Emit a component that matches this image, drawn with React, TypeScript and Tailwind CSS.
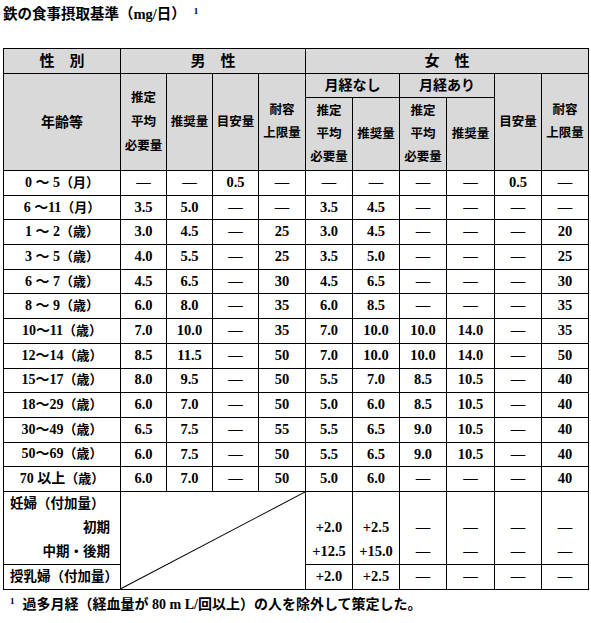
import React from 'react'

type Row = string[]

const ages: Row[] = [
  ['0 ～ 5（月）', '—', '—', '0.5', '—', '—', '—', '—', '—', '0.5', '—'],
  ['6 ～11（月）', '3.5', '5.0', '—', '—', '3.5', '4.5', '—', '—', '—', '—'],
  ['1 ～ 2（歳）', '3.0', '4.5', '—', '25', '3.0', '4.5', '—', '—', '—', '20'],
  ['3 ～ 5（歳）', '4.0', '5.5', '—', '25', '3.5', '5.0', '—', '—', '—', '25'],
  ['6 ～ 7（歳）', '4.5', '6.5', '—', '30', '4.5', '6.5', '—', '—', '—', '30'],
  ['8 ～ 9（歳）', '6.0', '8.0', '—', '35', '6.0', '8.5', '—', '—', '—', '35'],
  ['10～11（歳）', '7.0', '10.0', '—', '35', '7.0', '10.0', '10.0', '14.0', '—', '35'],
  ['12～14（歳）', '8.5', '11.5', '—', '50', '7.0', '10.0', '10.0', '14.0', '—', '50'],
  ['15～17（歳）', '8.0', '9.5', '—', '50', '5.5', '7.0', '8.5', '10.5', '—', '40'],
  ['18～29（歳）', '6.0', '7.0', '—', '50', '5.0', '6.0', '8.5', '10.5', '—', '40'],
  ['30～49（歳）', '6.5', '7.5', '—', '55', '5.5', '6.5', '9.0', '10.5', '—', '40'],
  ['50～69（歳）', '6.0', '7.5', '—', '50', '5.5', '6.5', '9.0', '10.5', '—', '40'],
  ['70 以上（歳）', '6.0', '7.0', '—', '50', '5.0', '6.0', '—', '—', '—', '40'],
]

const colWidths = ['w-[117px]', 'w-[46px]', 'w-[46px]', 'w-[46px]', 'w-[47px]', 'w-[47px]', 'w-[47px]', 'w-[47px]', 'w-[48px]', 'w-[47px]', 'w-[47px]']

const th = 'border border-black bg-[#d9d9d9] text-center align-middle font-bold p-0'
const td = 'border border-black text-center align-middle p-0 text-[14.5px] font-bold'

function Stack({ lines, lh = 'leading-[24px]' }: { lines: string[]; lh?: string }) {
  return (
    <div className={`text-[12.5px] ${lh}`}>
      {lines.map((l) => (
        <div key={l}>{l}</div>
      ))}
    </div>
  )
}

// age label: digits a bit larger than the bracketed unit
function AgeLabel({ text }: { text: string }) {
  const i = text.indexOf('（')
  return (
    <>
      <span className="text-[14px]">{text.slice(0, i)}</span>
      <span className="text-[13px]">{text.slice(i)}</span>
    </>
  )
}

export default function App() {
  return (
    <div className="w-[591px] h-[623px] bg-white text-black font-['Liberation_Serif','Noto_Sans_CJK_JP',serif]">
      <div className="h-[48px] pl-[3px] pt-[4px] flex items-start">
        <span className="text-[14.5px] leading-[20px] font-bold">鉄の食事摂取基準（mg/日）</span>
        <span className="ml-[8px] text-[9px] leading-[14px] font-bold">1</span>
      </div>

      <div className="pl-[3px]">
        <table className="border-collapse table-fixed w-[585px]">
          <colgroup>
            {colWidths.map((w, i) => (
              <col key={i} className={w} />
            ))}
          </colgroup>
          <thead>
            <tr className="h-[25px]">
              <th className={`${th} text-[15px]`}>性　別</th>
              <th colSpan={4} className={`${th} text-[15px]`}>男　性</th>
              <th colSpan={6} className={`${th} text-[15px]`}>女　性</th>
            </tr>
            <tr className="h-[24px]">
              <th rowSpan={2} className={`${th} text-[14px]`}>年齢等</th>
              <th rowSpan={2} className={th}><Stack lines={['推定', '平均', '必要量']} /></th>
              <th rowSpan={2} className={`${th} text-[12.5px]`}>推奨量</th>
              <th rowSpan={2} className={`${th} text-[12.5px]`}>目安量</th>
              <th rowSpan={2} className={th}><Stack lines={['耐容', '上限量']} lh="leading-[23px]" /></th>
              <th colSpan={2} className={`${th} text-[14px]`}>月経なし</th>
              <th colSpan={2} className={`${th} text-[14px]`}>月経あり</th>
              <th rowSpan={2} className={`${th} text-[12.5px]`}>目安量</th>
              <th rowSpan={2} className={th}><Stack lines={['耐容', '上限量']} lh="leading-[23px]" /></th>
            </tr>
            <tr className="h-[73px]">
              <th className={th}><Stack lines={['推定', '平均', '必要量']} lh="leading-[23px]" /></th>
              <th className={`${th} text-[12.5px]`}>推奨量</th>
              <th className={th}><Stack lines={['推定', '平均', '必要量']} lh="leading-[23px]" /></th>
              <th className={`${th} text-[12.5px]`}>推奨量</th>
            </tr>
          </thead>
          <tbody>
            {ages.map((r) => (
              <tr key={r[0]} className="h-[24.7px]">
                <td className="border border-black text-center align-middle p-0 text-[13px] leading-[16px] font-bold whitespace-nowrap">
                  <AgeLabel text={r[0]} />
                </td>
                {r.slice(1).map((v, i) => (
                  <td key={i} className={td}>{v}</td>
                ))}
              </tr>
            ))}

            {/* 妊婦 block */}
            <tr className="h-[24.3px]">
              <td className="border-x border-t border-black text-left align-middle pl-[6px] text-[13.5px] font-bold whitespace-nowrap">妊婦（付加量）</td>
              <td rowSpan={4} colSpan={4} className="relative border border-black p-0">
                <svg className="absolute inset-0 w-full h-full" viewBox="0 0 100 100" preserveAspectRatio="none">
                  <line x1="0" y1="100" x2="100" y2="0" stroke="#000" strokeWidth="1" vectorEffect="non-scaling-stroke" />
                </svg>
              </td>
              {Array.from({ length: 6 }).map((_, i) => (
                <td key={i} className="border-x border-t border-black p-0" />
              ))}
            </tr>
            <tr className="h-[24.3px]">
              <td className="border-x border-black text-right align-middle pr-[10px] text-[13.5px] font-bold">初期</td>
              {['+2.0', '+2.5', '—', '—', '—', '—'].map((v, i) => (
                <td key={i} className="border-x border-black text-center align-middle p-0 text-[14.5px] font-bold">{v}</td>
              ))}
            </tr>
            <tr className="h-[24.3px]">
              <td className="border-x border-black text-right align-middle pr-[10px] text-[13.5px] font-bold whitespace-nowrap">中期・後期</td>
              {['+12.5', '+15.0', '—', '—', '—', '—'].map((v, i) => (
                <td key={i} className="border-x border-black text-center align-middle p-0 text-[14.5px] font-bold">{v}</td>
              ))}
            </tr>
            <tr className="h-[24.8px]">
              <td className="border border-black text-left align-middle pl-[6px] text-[13.5px] font-bold whitespace-nowrap">授乳婦（付加量）</td>
              {['+2.0', '+2.5', '—', '—', '—', '—'].map((v, i) => (
                <td key={i} className={td}>{v}</td>
              ))}
            </tr>
          </tbody>
        </table>
      </div>

      <div className="flex items-start pl-[10px] pt-[5px]">
        <span className="text-[9px] leading-[12px] font-bold mr-[8px]">1</span>
        <span className="text-[14px] leading-[20px] font-bold">過多月経（経血量が 80 m L/回以上）の人を除外して策定した。</span>
      </div>
    </div>
  )
}
